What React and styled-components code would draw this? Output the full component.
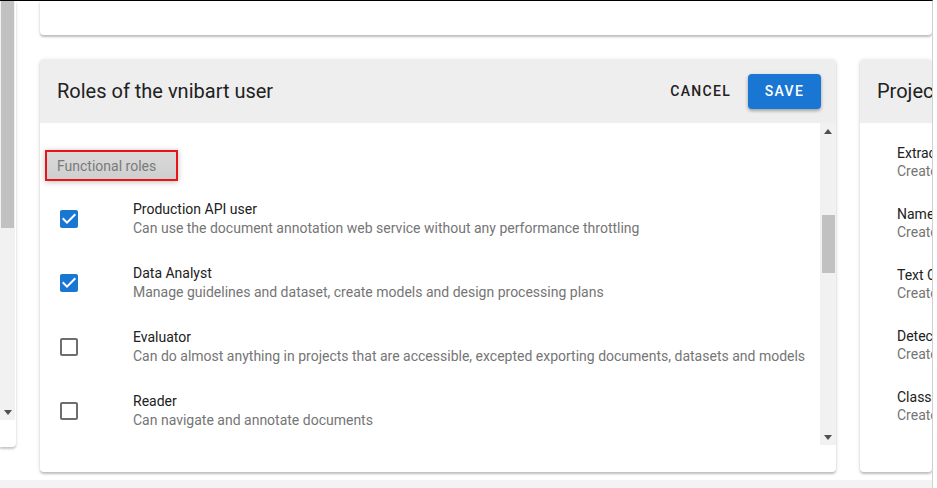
import React from "react";
import styled, { createGlobalStyle } from "styled-components";

const Global = createGlobalStyle`
  html, body {
    margin: 0;
    padding: 0;
    background: #ffffff;
    font-family: Roboto, "Liberation Sans", sans-serif;
  }
`;

const Page = styled.div`
  width: 932px;
  height: 487px;
  border-top: 1px solid #000;
  border-right: 1px solid #d0d0d0;
  display: flex;
  flex-direction: column;
  overflow: hidden;
`;

const Content = styled.div`
  height: 479px;
  display: flex;
  flex-shrink: 0;
`;

const Strip = styled.div`
  flex: 1;
  background: #f3f3f3;
`;

const SidePanel = styled.div`
  width: 16px;
  height: 446px;
  background: #fff;
  border-radius: 0 0 4px 0;
  box-shadow: 0 2px 2px rgba(0, 0, 0, 0.18), 0 1px 4px rgba(0, 0, 0, 0.08);
  display: flex;
  flex-direction: column;
  flex-shrink: 0;
`;

const Track = styled.div`
  width: ${(p) => p.$w || 16}px;
  height: ${(p) => p.$h}px;
  background: #f1f1f1;
  display: flex;
  flex-direction: column;
  align-items: center;
  flex-shrink: 0;
`;

const Thumb = styled.div`
  width: ${(p) => p.$w || 13}px;
  height: ${(p) => p.$h}px;
  margin-top: ${(p) => p.$top}px;
  background: #c1c1c1;
  flex-shrink: 0;
`;

const Arrow = styled.div`
  height: 16px;
  width: 100%;
  display: flex;
  align-items: center;
  justify-content: center;
  flex-shrink: 0;
  margin-top: ${(p) => (p.$push ? "auto" : "0")};
`;

const Main = styled.div`
  flex: 1;
  margin-left: 24px;
  display: flex;
  flex-direction: column;
  min-width: 0;
`;

const TopCard = styled.div`
  height: 34px;
  background: #fff;
  border-radius: 0 0 4px 4px;
  box-shadow: 0 2px 2px rgba(0, 0, 0, 0.22), 0 1px 5px rgba(0, 0, 0, 0.08);
  flex-shrink: 0;
`;

const Row = styled.div`
  display: flex;
  gap: 24px;
  margin-top: 24px;
`;

const Card = styled.div`
  width: ${(p) => (p.$w ? `${p.$w}px` : "auto")};
  flex: ${(p) => (p.$w ? "0 0 auto" : "1")};
  height: 413px;
  background: #fff;
  border-radius: 4px;
  box-shadow: 0 2px 2px rgba(0, 0, 0, 0.2), 0 1px 5px rgba(0, 0, 0, 0.1);
  display: flex;
  flex-direction: column;
  overflow: hidden;
  min-width: 0;
`;

const Header = styled.div`
  height: 64px;
  background: #eeeeee;
  display: flex;
  align-items: center;
  padding: 0 15px 0 17px;
  flex-shrink: 0;
`;

const Title = styled.div`
  font-size: 20px;
  color: #212121;
  flex: 1;
  white-space: nowrap;
`;

const Actions = styled.div`
  display: flex;
  align-items: center;
  gap: 9px;
`;

const Button = styled.button`
  font-family: Roboto, "Liberation Sans", sans-serif;
  font-size: 14px;
  font-weight: 500;
  letter-spacing: 1.3px;
  text-transform: uppercase;
  height: 35px;
  border: none;
  border-radius: 4px;
  padding: 0 ${(p) => (p.$primary ? 16 : 8)}px;
  min-width: ${(p) => (p.$primary ? "73px" : "0")};
  background: ${(p) => (p.$primary ? "#1976d2" : "transparent")};
  color: ${(p) => (p.$primary ? "#fff" : "#212121")};
  box-shadow: ${(p) =>
    p.$primary ? "0 2px 3px rgba(0,0,0,0.25), 0 1px 5px rgba(0,0,0,0.1)" : "none"};
  cursor: pointer;
`;

const Body = styled.div`
  flex: 1;
  display: flex;
  align-items: flex-start;
  padding-bottom: 27px;
`;

const List = styled.div`
  flex: 1;
  height: 322px;
  overflow: hidden;
  padding-top: 27px;
  box-sizing: border-box;
`;

const Subheader = styled.div`
  display: flex;
  align-items: center;
  width: fit-content;
  margin: 0 0 6px 5px;
  height: 31px;
  box-sizing: border-box;
  padding: 0 20px 0 10px;
  border: 2px solid #e8141a;
  background: linear-gradient(#d9d9d9, #cfcfcf);
  box-shadow: 0 1px 6px rgba(0, 0, 0, 0.25);
  color: #7a7a7a;
  font-size: 14px;
`;

const Item = styled.div`
  height: 64px;
  display: flex;
  align-items: center;
  padding-left: 17px;
`;

const Check = styled.div`
  width: 24px;
  height: 24px;
  flex-shrink: 0;
  margin-right: 52px;
`;

const Text = styled.div`
  display: flex;
  flex-direction: column;
  white-space: nowrap;
  line-height: 19px;
`;

const Primary = styled.span`
  font-size: 14px;
  color: #212121;
`;

const Secondary = styled.span`
  font-size: 14px;
  color: #757575;
`;

const ProjectList = styled.div`
  padding: 8px 0 0 37px;
`;

const ProjectItem = styled.div`
  height: 61px;
  display: flex;
  flex-direction: column;
  justify-content: center;
  line-height: 18px;
  white-space: nowrap;
`;

const CheckIcon = ({ checked }) =>
  checked ? (
    <svg width="24" height="24" viewBox="0 0 24 24">
      <path
        fill="#1976d2"
        d="M19 3H5c-1.11 0-2 .9-2 2v14c0 1.1.89 2 2 2h14c1.11 0 2-.9 2-2V5c0-1.1-.89-2-2-2zm-9 14l-5-5 1.41-1.41L10 14.17l7.59-7.59L19 8l-9 9z"
      />
    </svg>
  ) : (
    <svg width="24" height="24" viewBox="0 0 24 24">
      <path
        fill="#6e6e6e"
        d="M19 5v14H5V5h14m0-2H5c-1.1 0-2 .9-2 2v14c0 1.1.9 2 2 2h14c1.1 0 2-.9 2-2V5c0-1.1-.9-2-2-2z"
      />
    </svg>
  );

const Tri = ({ up }) => (
  <svg width="8" height="5" viewBox="0 0 8 5">
    <path fill="#505050" d={up ? "M0 5 L4 0 L8 5 Z" : "M0 0 L8 0 L4 5 Z"} />
  </svg>
);

const roles = [
  {
    name: "Production API user",
    desc: "Can use the document annotation web service without any performance throttling",
    checked: true,
  },
  {
    name: "Data Analyst",
    desc: "Manage guidelines and dataset, create models and design processing plans",
    checked: true,
  },
  {
    name: "Evaluator",
    desc: "Can do almost anything in projects that are accessible, excepted exporting documents, datasets and models",
    checked: false,
  },
  {
    name: "Reader",
    desc: "Can navigate and annotate documents",
    checked: false,
  },
];

const projects = [
  "Extraction",
  "Named Entities",
  "Text Classification",
  "Detection",
  "Classification",
];

export default function App() {
  return (
    <>
      <Global />
      <Page>
        <Content>
          <SidePanel>
            <Track $w={15} $h={419}>
              <Thumb $h={227} $top={0} $w={13} />
              <Arrow $push>
                <Tri />
              </Arrow>
            </Track>
          </SidePanel>
          <Main>
            <TopCard />
            <Row>
              <Card $w={796}>
                <Header>
                  <Title>Roles of the vnibart user</Title>
                  <Actions>
                    <Button>Cancel</Button>
                    <Button $primary>Save</Button>
                  </Actions>
                </Header>
                <Body>
                  <List>
                    <Subheader>Functional roles</Subheader>
                    {roles.map((r) => (
                      <Item key={r.name}>
                        <Check>
                          <CheckIcon checked={r.checked} />
                        </Check>
                        <Text>
                          <Primary>{r.name}</Primary>
                          <Secondary>{r.desc}</Secondary>
                        </Text>
                      </Item>
                    ))}
                  </List>
                  <Track $h={322}>
                    <Arrow>
                      <Tri up />
                    </Arrow>
                    <Thumb $h={58} $top={76} />
                    <Arrow $push>
                      <Tri />
                    </Arrow>
                  </Track>
                </Body>
              </Card>
              <Card>
                <Header>
                  <Title>Projects</Title>
                </Header>
                <ProjectList>
                  {projects.map((p) => (
                    <ProjectItem key={p}>
                      <Primary>{p}</Primary>
                      <Secondary>Create</Secondary>
                    </ProjectItem>
                  ))}
                </ProjectList>
              </Card>
            </Row>
          </Main>
        </Content>
        <Strip />
      </Page>
    </>
  );
}
